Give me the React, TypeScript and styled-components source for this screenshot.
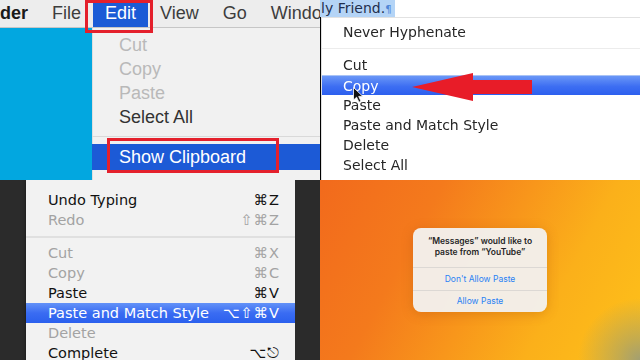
import styled, { createGlobalStyle } from "styled-components";

const GlobalStyle = createGlobalStyle`
  html, body {
    margin: 0;
    padding: 0;
    background: #000;
    overflow: hidden;
  }
`;

const Collage = styled.div`
  display: grid;
  grid-template-columns: 320px 320px;
  grid-template-rows: 180px 180px;
  width: 640px;
  height: 360px;
`;

const Panel = styled.section`
  position: relative;
  overflow: hidden;
  display: flex;
  flex-direction: column;
`;

/* ---------- top left: finder edit menu ---------- */

const FinderBar = styled.div`
  height: 28px;
  box-sizing: border-box;
  display: flex;
  background: #ededed;
  border-bottom: 1px solid #c6c6c6;
  font-family: "Liberation Sans", Arial, sans-serif;
  font-size: 18px;
  line-height: 27px;
  color: #3d3d3d;
`;

const BarItem = styled.div<{ $active?: boolean; $bold?: boolean; $first?: boolean }>`
  position: relative;
  padding: ${(p) => (p.$first ? "0 12px 0 0" : "0 12px")};
  font-weight: ${(p) => (p.$bold ? 700 : 400)};
  color: ${(p) => (p.$active ? "#fff" : p.$bold ? "#1a1a1a" : "#3d3d3d")};
  background: ${(p) => (p.$active ? "#1b5bd6" : "transparent")};
  white-space: nowrap;
`;

// red annotation box drawn over a menu title or item
const MenuTitleFrame = styled.span`
  position: absolute;
  left: -8px;
  right: -5px;
  top: 0;
  bottom: -6px;
  border: 3px solid #e4202c;
`;

const ItemFrame = styled.span`
  position: absolute;
  left: 15px;
  top: -6px;
  width: 166px;
  height: 29px;
  border: 3px solid #e4202c;
`;

const FinderBody = styled.div`
  flex: 1;
  display: flex;
`;

const Desktop = styled.div`
  width: 92px;
  background: #02a7e0;
`;

const Dropdown = styled.div`
  flex: 1;
  background: #f1f1f1;
  padding-top: 5px;
  font-family: "Liberation Sans", Arial, sans-serif;
  font-size: 18px;
  box-shadow: inset 1px 0 0 #dedede;
`;

const DropItem = styled.div<{ $disabled?: boolean; $active?: boolean }>`
  position: relative;
  height: ${(p) => (p.$active ? 26 : 24)}px;
  line-height: ${(p) => (p.$active ? 26 : 24)}px;
  padding-left: 27px;
  color: ${(p) => (p.$active ? "#fff" : p.$disabled ? "#b9b9b9" : "#333")};
  background: ${(p) => (p.$active ? "#1c5ad6" : "transparent")};
`;

const DropSeparator = styled.div`
  height: 15px;
  display: flex;
  align-items: center;
  &::after {
    content: "";
    flex: 1;
    height: 1px;
    background: #d9d9d9;
  }
`;

/* ---------- top right: text context menu ---------- */

const DocLine = styled.div`
  height: 17px;
  display: flex;
  background: #fff;
  font-family: "DejaVu Sans", sans-serif;
  font-size: 14px;
  line-height: 17px;
  color: #1f2f4d;
`;

const Selection = styled.span`
  background: #b4d4f6;
  padding: 0 3px 0 1px;
  white-space: nowrap;
`;

const Pilcrow = styled.span`
  color: #4f86d6;
  font-size: 10px;
`;

const ContextMenu = styled.div`
  flex: 1;
  background: #fff;
  border-top: 1px solid #e2e2e2;
  border-left: 1px solid #e0e0e0;
  margin-left: 1px;
  padding-top: 4px;
  font-family: "DejaVu Sans", sans-serif;
  font-size: 14px;
  color: #262626;
  filter: blur(0.35px);
`;

const ContextItem = styled.div<{ $active?: boolean }>`
  height: 20px;
  line-height: 20px;
  padding-left: 21px;
  box-sizing: border-box;
  color: ${(p) => (p.$active ? "#fff" : "#262626")};
  background: ${(p) =>
    p.$active ? "linear-gradient(#6a97f7, #3d6ef2 55%, #2c5fee)" : "transparent"};
  border-top: ${(p) => (p.$active ? "1px solid #a9c3f6" : "none")};
`;

const ContextSeparator = styled.div`
  height: 13px;
  display: flex;
  align-items: center;
  &::after {
    content: "";
    flex: 1;
    height: 1px;
    background: #ececec;
  }
`;

const Arrow = styled.svg`
  position: absolute;
  left: 92px;
  top: 73px;
`;

const Cursor = styled.svg`
  position: absolute;
  left: 33px;
  top: 87px;
`;

/* ---------- bottom left: dark edit menu ---------- */

const TopStrip = styled.div`
  height: 6px;
  display: flex;
  overflow: hidden;
  background: #d3d3d3;
  font-family: "DejaVu Sans", sans-serif;
  font-size: 14px;
  line-height: 20px;
  color: #555;
`;

const StripItem = styled.div<{ $active?: boolean; $w: number }>`
  width: ${(p) => p.$w}px;
  flex-shrink: 0;
  margin-top: -16px;
  text-align: center;
  white-space: nowrap;
  color: ${(p) => (p.$active ? "#fff" : "#666")};
  background: ${(p) => (p.$active ? "#3a6cf0" : "transparent")};
`;

const DarkBody = styled.div`
  flex: 1;
  display: flex;
`;

const DarkSide = styled.div<{ $w?: number }>`
  width: ${(p) => (p.$w ? `${p.$w}px` : "auto")};
  flex: ${(p) => (p.$w ? "none" : 1)};
  background: #2b2b2b;
`;

const EditMenu = styled.div`
  width: 269px;
  background: #f2f2f2;
  padding-top: 10px;
  font-family: "DejaVu Sans", sans-serif;
  font-size: 14.5px;
  box-shadow: 0 0 3px rgba(0, 0, 0, 0.5);
`;

const EditItem = styled.div<{ $disabled?: boolean; $active?: boolean }>`
  display: flex;
  justify-content: space-between;
  height: 20px;
  line-height: 20px;
  padding: 0 15px 0 22px;
  color: ${(p) => (p.$active ? "#fff" : p.$disabled ? "#a3a3a3" : "#111")};
  background: ${(p) =>
    p.$active ? "linear-gradient(#6392f8, #3a6cf2 50%, #2b60ee)" : "transparent"};
`;

const Shortcut = styled.span`
  letter-spacing: 1px;
`;

const EditSeparator = styled.div`
  height: 13px;
  display: flex;
  align-items: center;
  &::after {
    content: "";
    flex: 1;
    height: 2px;
    background: #e0e0e0;
  }
`;

/* ---------- bottom right: paste alert ---------- */

const PhoneScreen = styled(Panel)`
  align-items: center;
  justify-content: center;
  background:
    radial-gradient(circle at 100% 100%, #a29f72 0, rgba(178, 165, 95, 0.75) 22px, rgba(254, 190, 26, 0) 62px),
    linear-gradient(118deg, #f26a1c 0%, #f47a1c 30%, #f8961b 52%, #fbb01a 72%, #fec11a 100%);
`;

const Alert = styled.div`
  width: 134px;
  height: 84px;
  border-radius: 8px;
  background: rgba(243, 240, 236, 0.97);
  box-shadow: 0 2px 12px rgba(150, 60, 0, 0.25);
  display: flex;
  flex-direction: column;
  font-family: Inter, "Noto Sans", sans-serif;
  overflow: hidden;
`;

const AlertTitle = styled.div`
  height: 40px;
  box-sizing: border-box;
  padding-top: 8px;
  text-align: center;
  font-size: 8.5px;
  font-weight: 600;
  line-height: 11px;
  color: #262626;
  border-bottom: 1px solid #dcd8d4;
`;

const AlertButton = styled.div<{ $last?: boolean }>`
  flex: 1;
  display: flex;
  align-items: center;
  justify-content: center;
  font-size: 8.5px;
  color: #2a82f4;
  border-bottom: ${(p) => (p.$last ? "none" : "1px solid #dcd8d4")};
`;

const finderItems = [
  { label: "Cut", disabled: true },
  { label: "Copy", disabled: true },
  { label: "Paste", disabled: true },
  { label: "Select All", disabled: false },
];

const contextAfter = ["Paste", "Paste and Match Style", "Delete", "Select All"];

const editTop = [
  { label: "Undo Typing", key: "⌘Z" },
  { label: "Redo", key: "⇧⌘Z", disabled: true },
];

const editBottom = [
  { label: "Cut", key: "⌘X", disabled: true },
  { label: "Copy", key: "⌘C", disabled: true },
  { label: "Paste", key: "⌘V" },
  { label: "Paste and Match Style", key: "⌥⇧⌘V", active: true },
  { label: "Delete", key: "", disabled: true },
  { label: "Complete", key: "⌥⎋" },
];

export default function App() {
  return (
    <>
      <GlobalStyle />
      <Collage>
        <Panel>
          <FinderBar>
            <BarItem $first $bold>der</BarItem>
            <BarItem>File</BarItem>
            <BarItem $active>
              Edit
              <MenuTitleFrame />
            </BarItem>
            <BarItem>View</BarItem>
            <BarItem>Go</BarItem>
            <BarItem>Windo</BarItem>
          </FinderBar>
          <FinderBody>
            <Desktop />
            <Dropdown>
              {finderItems.map((it) => (
                <DropItem key={it.label} $disabled={it.disabled}>
                  {it.label}
                </DropItem>
              ))}
              <DropSeparator />
              <DropItem $active>
                Show Clipboard
                <ItemFrame />
              </DropItem>
            </Dropdown>
          </FinderBody>
        </Panel>

        <Panel>
          <DocLine>
            <Selection>
              ly Friend.<Pilcrow>¶</Pilcrow>
            </Selection>
          </DocLine>
          <ContextMenu>
            <ContextItem>Never Hyphenate</ContextItem>
            <ContextSeparator />
            <ContextItem>Cut</ContextItem>
            <ContextItem $active>Copy</ContextItem>
            {contextAfter.map((t) => (
              <ContextItem key={t}>{t}</ContextItem>
            ))}
          </ContextMenu>
          <Arrow width="120" height="28" viewBox="0 0 120 28">
            <polygon points="0,14 61,0 61,7 120,7 120,21 61,21 61,28" fill="#e81c28" />
          </Arrow>
          <Cursor width="11" height="16" viewBox="0 0 11 16">
            <path d="M0.5 0.5 L0.5 13 L3.6 10.2 L6 15.2 L8 14.3 L5.7 9.4 L9.8 9.4 Z" fill="#111" stroke="#fff" strokeWidth="0.8" />
          </Cursor>
        </Panel>

        <Panel>
          <TopStrip>
            <StripItem $w={26}>le</StripItem>
            <StripItem $w={46} $active>Edit</StripItem>
            <StripItem $w={70}>Format</StripItem>
            <StripItem $w={46}>View</StripItem>
            <StripItem $w={74}>Window</StripItem>
            <StripItem $w={50}>Help</StripItem>
          </TopStrip>
          <DarkBody>
            <DarkSide $w={26} />
            <EditMenu>
              {editTop.map((it) => (
                <EditItem key={it.label} $disabled={it.disabled}>
                  <span>{it.label}</span>
                  <Shortcut>{it.key}</Shortcut>
                </EditItem>
              ))}
              <EditSeparator />
              {editBottom.map((it) => (
                <EditItem key={it.label} $disabled={it.disabled} $active={it.active}>
                  <span>{it.label}</span>
                  <Shortcut>{it.key}</Shortcut>
                </EditItem>
              ))}
            </EditMenu>
            <DarkSide />
          </DarkBody>
        </Panel>

        <PhoneScreen>
          <Alert>
            <AlertTitle>
              “Messages” would like to
              <br />
              paste from “YouTube”
            </AlertTitle>
            <AlertButton>Don't Allow Paste</AlertButton>
            <AlertButton $last>Allow Paste</AlertButton>
          </Alert>
        </PhoneScreen>
      </Collage>
    </>
  );
}
